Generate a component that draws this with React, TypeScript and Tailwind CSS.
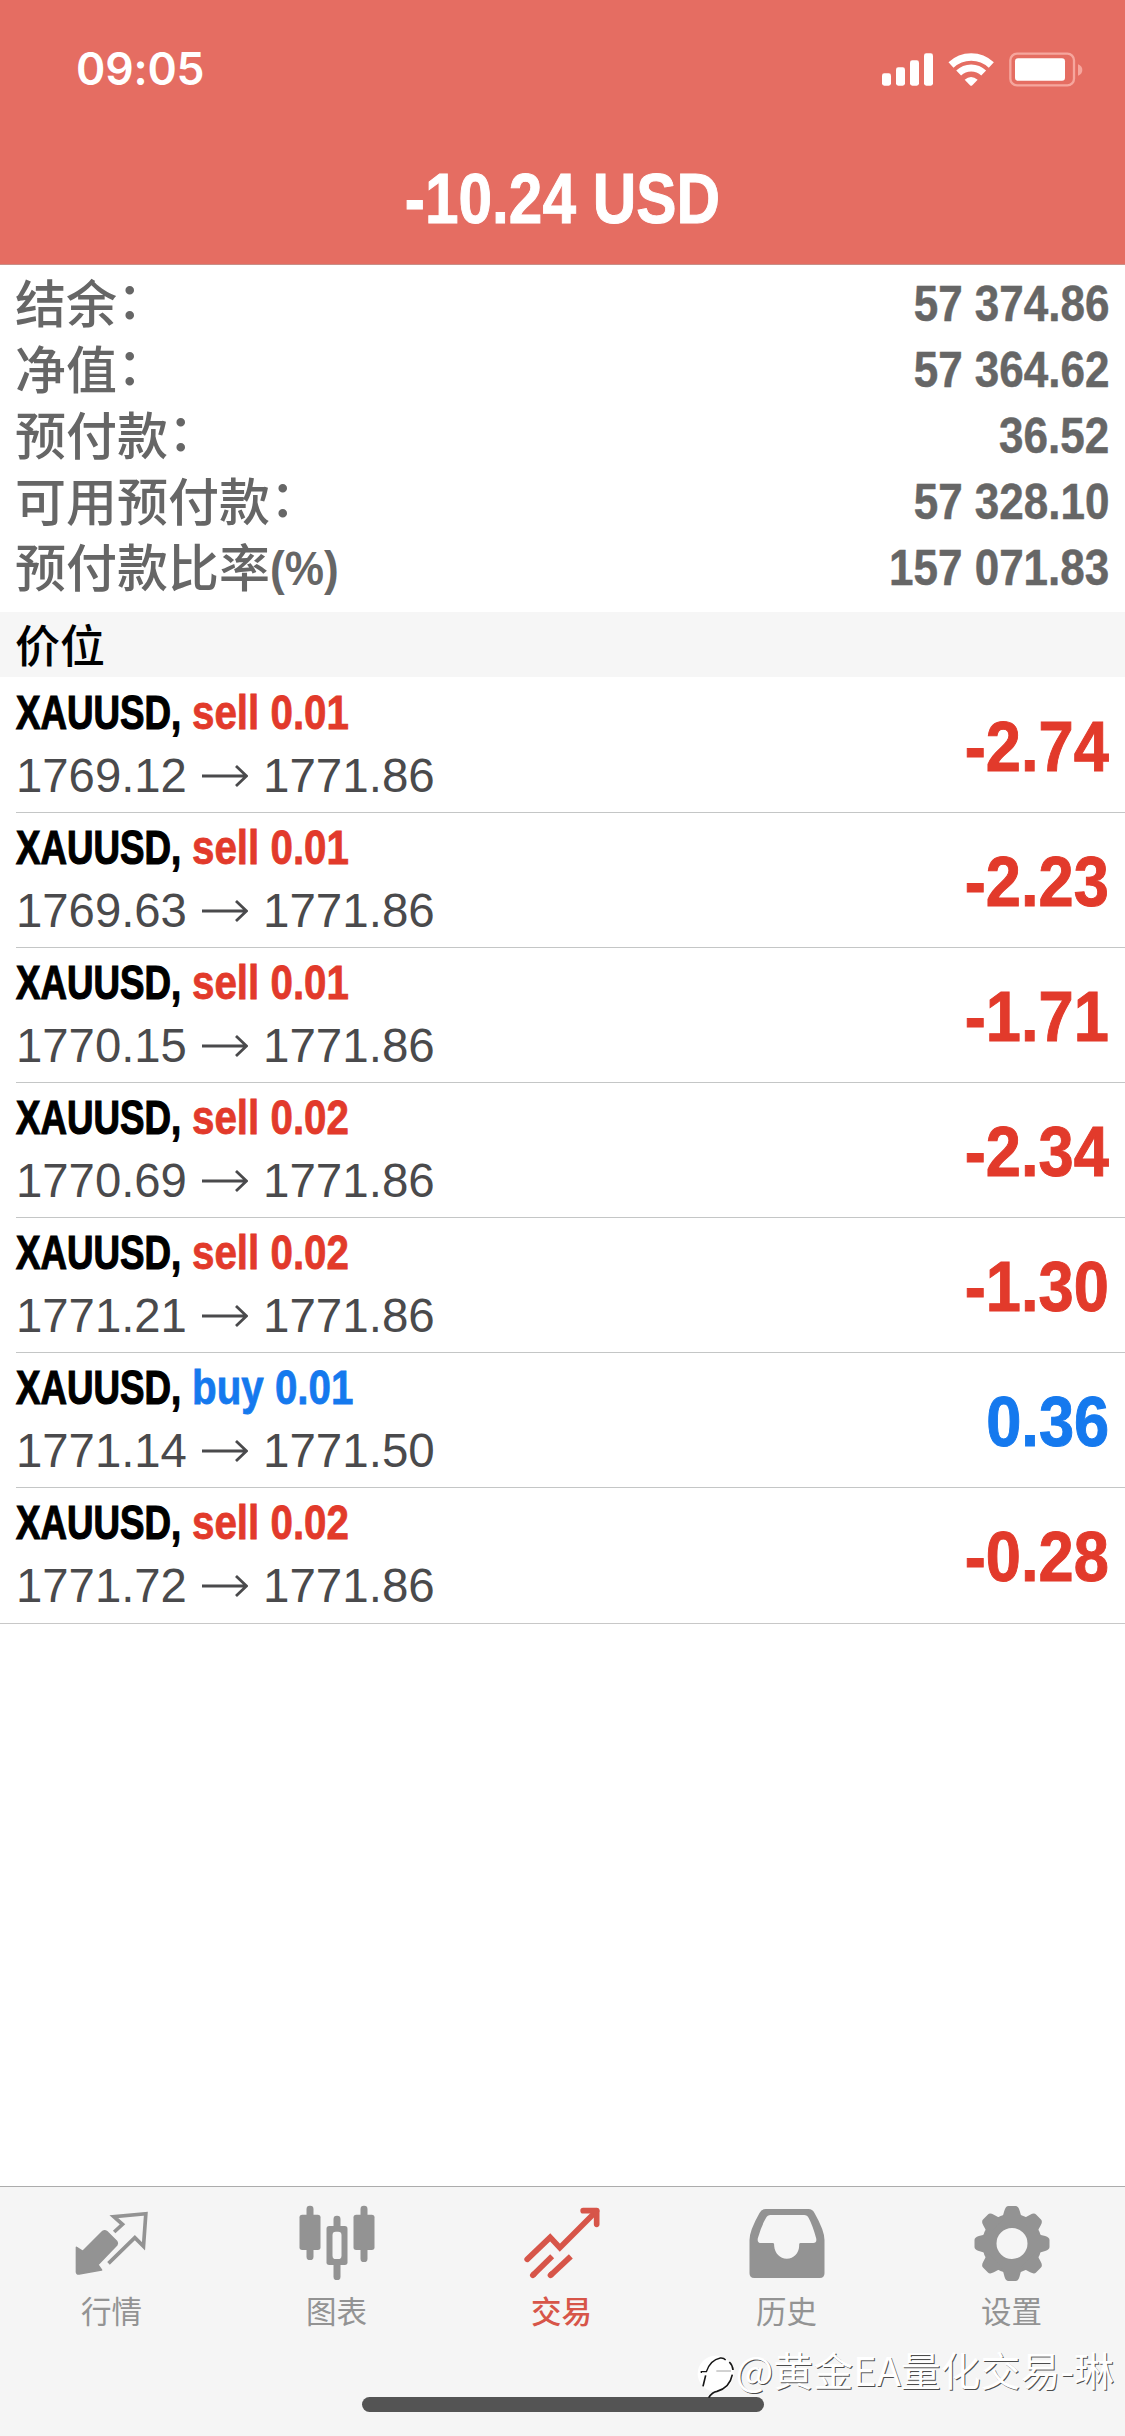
import type { ReactNode } from 'react';

interface Position {
  symbol: string;
  side: 'sell' | 'buy';
  volume: string;
  open: string;
  current: string;
  profit: string;
}

interface Tab {
  label: string;
  icon: ReactNode;
  active?: boolean;
}

const summary = [
  { label: '结余', value: '57 374.86' },
  { label: '净值', value: '57 364.62' },
  { label: '预付款', value: '36.52' },
  { label: '可用预付款', value: '57 328.10' },
  { label: '预付款比率', unit: '(%)', value: '157 071.83' },
];

const positions: Position[] = [
  { symbol: 'XAUUSD', side: 'sell', volume: '0.01', open: '1769.12', current: '1771.86', profit: '-2.74' },
  { symbol: 'XAUUSD', side: 'sell', volume: '0.01', open: '1769.63', current: '1771.86', profit: '-2.23' },
  { symbol: 'XAUUSD', side: 'sell', volume: '0.01', open: '1770.15', current: '1771.86', profit: '-1.71' },
  { symbol: 'XAUUSD', side: 'sell', volume: '0.02', open: '1770.69', current: '1771.86', profit: '-2.34' },
  { symbol: 'XAUUSD', side: 'sell', volume: '0.02', open: '1771.21', current: '1771.86', profit: '-1.30' },
  { symbol: 'XAUUSD', side: 'buy', volume: '0.01', open: '1771.14', current: '1771.50', profit: '0.36' },
  { symbol: 'XAUUSD', side: 'sell', volume: '0.02', open: '1771.72', current: '1771.86', profit: '-0.28' },
];

const StatusIcons = () => (
  <svg className="w-[210px] h-10" viewBox="60 55 630 120" fill="white">
    {/* Signal */}
    <rect x="66" y="128" width="27" height="37" rx="7" />
    <rect x="108" y="110" width="27" height="55" rx="7" />
    <rect x="150" y="89" width="27" height="76" rx="7" />
    <rect x="192" y="68" width="27" height="97" rx="7" />
    {/* Wifi */}
    <g fill="none" stroke="white">
      <path d="M273 103 A88 88 0 0 1 394 103" strokeWidth="22" />
      <path d="M296 127 A54 54 0 0 1 371 127" strokeWidth="21" />
    </g>
    <path d="M314 147 Q333 131 353 147 L337 164 Q333.500 167 330 164 Z" />
    {/* Battery */}
    <rect x="451" y="69" width="191" height="95" rx="20" fill="none" stroke="#f6a69d" strokeWidth="7" />
    <rect x="465" y="83" width="150" height="67" rx="9" />
    <path d="M654 101 Q667 106 667 118 Q667 130 654 135 Z" fill="#f6a69d" />
  </svg>
);

const QuotesIcon = () => (
  <svg className="w-[100px] h-[87px]" viewBox="187.5 90 300 261">
    <path
      d="M228 232 L247 244 L307 184 Q313 180 319 185 L349 215 Q353 220 349 225 L292 284 L303 300 L236 312 Q228 313 228 306 Z"
      fill="#939393"
      stroke="#939393"
      strokeWidth="5"
      strokeLinejoin="round"
    />
    <path
      d="M341 186 L366 163 L340 140 L436 131 L429 229 L403 203 L324 280"
      fill="none"
      stroke="#939393"
      strokeWidth="11"
    />
  </svg>
);

const ChartIcon = () => (
  <svg className="w-[100px] h-[87px]" viewBox="862.5 90 300 261" fill="#939393">
    <rect x="918" y="107" width="21" height="163" rx="10" />
    <rect x="897" y="134" width="63" height="106" rx="8" />
    <rect x="999" y="137" width="21" height="193" rx="10" />
    <rect x="978" y="168" width="63" height="117" rx="8" />
    <rect x="996" y="185" width="27" height="82" rx="10" fill="#f5f5f5" />
    <rect x="1080" y="107" width="21" height="169" rx="10" />
    <rect x="1059" y="134" width="63" height="106" rx="8" />
  </svg>
);

const TradeIcon = () => (
  <svg
    className="w-[100px] h-[87px]"
    viewBox="337.5 90 300 261"
    fill="none"
    stroke="#d75549"
    strokeWidth="17"
    strokeLinecap="round"
  >
    <path d="M380 268 L449 202 L478 233 L588 123" strokeLinejoin="miter" />
    <path d="M548 122 H588.500 V163" strokeLinejoin="round" />
    <path d="M397 316 L455 259" strokeLinecap="butt" />
    <path d="M450 316 L511 259" strokeLinecap="butt" />
    <path d="M397 316 L400 313 M450 316 L453 313" />
  </svg>
);

const HistoryIcon = () => (
  <svg className="w-[100px] h-[87px]" viewBox="172.5 90 300 261" fill="#939393">
    <path
      fillRule="evenodd"
      d="M256 117 H384 Q396 117 402 129 Q432 182 432 210 V310 Q432 324 418 324 H221 Q207 324 207 310 V210 Q207 182 237 129 Q243 117 256 117 Z
      M270 135 Q261 135 256 145 Q242 168 232 205 Q229 219 242 219 H277 C281 219 281 223 281 228 C283 250 298 266 319 266 C340 266 355 250 356 228 C356 223 356 219 360 219 H398 Q410 219 407 205 Q397 168 385 145 Q380 135 371 135 Z"
    />
  </svg>
);

const teeth = [0, 45, 90, 135, 180, 225, 270, 315];

const SettingsIcon = () => (
  <svg className="w-[100px] h-[87px]" viewBox="847.5 90 300 261">
    <circle cx="994.500" cy="220.500" r="68" fill="none" stroke="#939393" strokeWidth="43" />
    {teeth.map(angle => (
      <path
        key={angle}
        d="M960 150 Q969 137 972 121 Q976 108 984 108 H1005 Q1013 108 1017 121 Q1020 137 1029 150 Z"
        transform={`rotate(${angle} 994.5 220.5)`}
        fill="#939393"
      />
    ))}
  </svg>
);

const tabs: Tab[] = [
  { label: '行情', icon: <QuotesIcon /> },
  { label: '图表', icon: <ChartIcon /> },
  { label: '交易', icon: <TradeIcon />, active: true },
  { label: '历史', icon: <HistoryIcon /> },
  { label: '设置', icon: <SettingsIcon /> },
];

const Header = () => (
  <header className="h-[265px] shrink-0 bg-[#e56d62] border-b border-[#c98f88] text-white">
    <div className="h-[138px] flex items-center justify-between pl-[76px] pr-[35px]">
      <span className="font-['Inter',sans-serif] text-[44.5px] font-semibold leading-none tracking-[-0.2px]">09:05</span>
      <StatusIcons />
    </div>
    <h1 className="text-center text-[71px] leading-[121px] font-bold scale-x-[0.85] [-webkit-text-stroke:1px]">
      -10.24 USD
    </h1>
  </header>
);

const Summary = () => (
  <section className="h-[347px] shrink-0 pt-[6px] pl-[15px] pr-4 text-[#666666]">
    {summary.map(({ label, unit, value }) => (
      <div key={label} className="h-[66px] flex items-center justify-between">
        <div className="flex items-center">
          <span className="font-['Noto_Sans_CJK_SC',sans-serif] text-[51px] leading-[66px] pb-[7px] font-medium">
            {label}
            {!unit && <span className="inline-block -translate-y-1">：</span>}
          </span>
          {unit && <span className="text-[49px] leading-[66px] font-bold origin-left scale-x-[0.9]">{unit}</span>}
        </div>
        <span className="text-[50px] leading-[66px] font-bold origin-right scale-x-[0.88] [-webkit-text-stroke:0.5px]">
          {value}
        </span>
      </div>
    ))}
  </section>
);

const PositionRow = ({ position, last }: { position: Position; last: boolean }) => {
  const { symbol, side, volume, open, current, profit } = position;
  const color = side === 'buy' ? 'text-[#1579ee]' : 'text-[#e23a2b]';

  return (
    <li className={last ? 'pl-4 pb-px border-b border-[#c8c8c8]' : 'ml-4 border-b border-[#c4c6c6]'}>
      <div className="h-[134px] flex items-center justify-between pr-4">
        <div className="pb-[3px]">
          <div className="flex h-[64px] items-center text-[48px] leading-none font-bold whitespace-pre">
            <div className="w-[176px]">
              <span className="inline-block origin-left scale-x-[0.765] text-black [-webkit-text-stroke:1.2px]">
                {symbol},
              </span>
            </div>
            <span className={`inline-block origin-left scale-x-[0.84] [-webkit-text-stroke:0.8px] ${color}`}>
              {side} {volume}
            </span>
          </div>
          <div className="flex h-[62px] items-center text-[48px] leading-none text-[#4a4a4c]">
            <span className="w-[186px] origin-left scale-x-[0.985]">{open}</span>
            <svg className="w-[46px] h-[24px] mr-[15px]" viewBox="0 0 46 24" fill="none" stroke="#4a4a4c" strokeWidth="2.8">
              <path d="M0 12 H44 M34 2 L44.500 12 L34 22" />
            </svg>
            <span className="origin-left scale-x-[0.99]">{current}</span>
          </div>
        </div>
        <span
          className={`pt-[3px] text-[71px] leading-none font-bold origin-right scale-x-[0.89] [-webkit-text-stroke:1px] ${color}`}
        >
          {profit}
        </span>
      </div>
    </li>
  );
};

const TabBar = () => (
  <nav className="h-[250px] shrink-0 bg-[#f5f5f5] border-t border-[#acacac] flex flex-col items-center">
    <div className="w-full flex pt-[13px]">
      {tabs.map(({ label, icon, active }) => (
        <div key={label} className="flex-1 flex flex-col items-center">
          {icon}
          <span
            className={`font-['Noto_Sans_CJK_SC',sans-serif] text-[30.5px] leading-[46px] pr-[2px] ${active ? 'text-[#d75549] font-medium' : 'text-[#939393]'
              }`}
          >
            {label}
          </span>
        </div>
      ))}
    </div>
    {/* Home indicator */}
    <div className="mt-[64px] w-[402px] h-[15px] rounded-full bg-[#545454]" />
  </nav>
);

const Watermark = () => (
  <div className="absolute right-[11px] bottom-[36px] flex items-start text-white">
    <svg className="w-[46px] h-[48px] -mr-[5px]" viewBox="12 36 138 144">
      <circle cx="74" cy="101" r="54" fill="white" />
      <path
        d="M31 99 V95 H46 Q58 60 88 54 Q98 53 104 60"
        fill="none"
        stroke="#161616"
        strokeWidth="4"
      />
      <path d="M115 66 Q125 76 126 90 M124 104 Q116 144 78 154 Q64 156 53 173 M44 106 L36 139" fill="none" stroke="#161616" strokeWidth="5" />
      <path d="M76 93 H120" stroke="#777777" strokeWidth="2" />
    </svg>
    <span className="font-['Noto_Sans_CJK_SC',sans-serif] text-[40px] leading-[34px] whitespace-nowrap tracking-[-0.1px] [text-shadow:1px_1px_0_rgba(0,0,0,0.7)]">
      @黄金EA量化交易-琳
    </span>
  </div>
);

export default function App() {
  return (
    <div className="relative w-[1125px] h-[2436px] overflow-hidden bg-white flex flex-col font-['Liberation_Sans',sans-serif]">
      <Header />
      <Summary />
      <h2 className="h-[65px] shrink-0 bg-[#f6f6f6] pl-[15px] font-['Noto_Sans_CJK_SC',sans-serif] text-[45px] leading-[63px] font-medium text-black">
        价位
      </h2>
      <ul className="flex-1 pt-px">
        {positions.map((position, index) => (
          <PositionRow key={index} position={position} last={index === positions.length - 1} />
        ))}
      </ul>
      <TabBar />
      <Watermark />
    </div>
  );
}
